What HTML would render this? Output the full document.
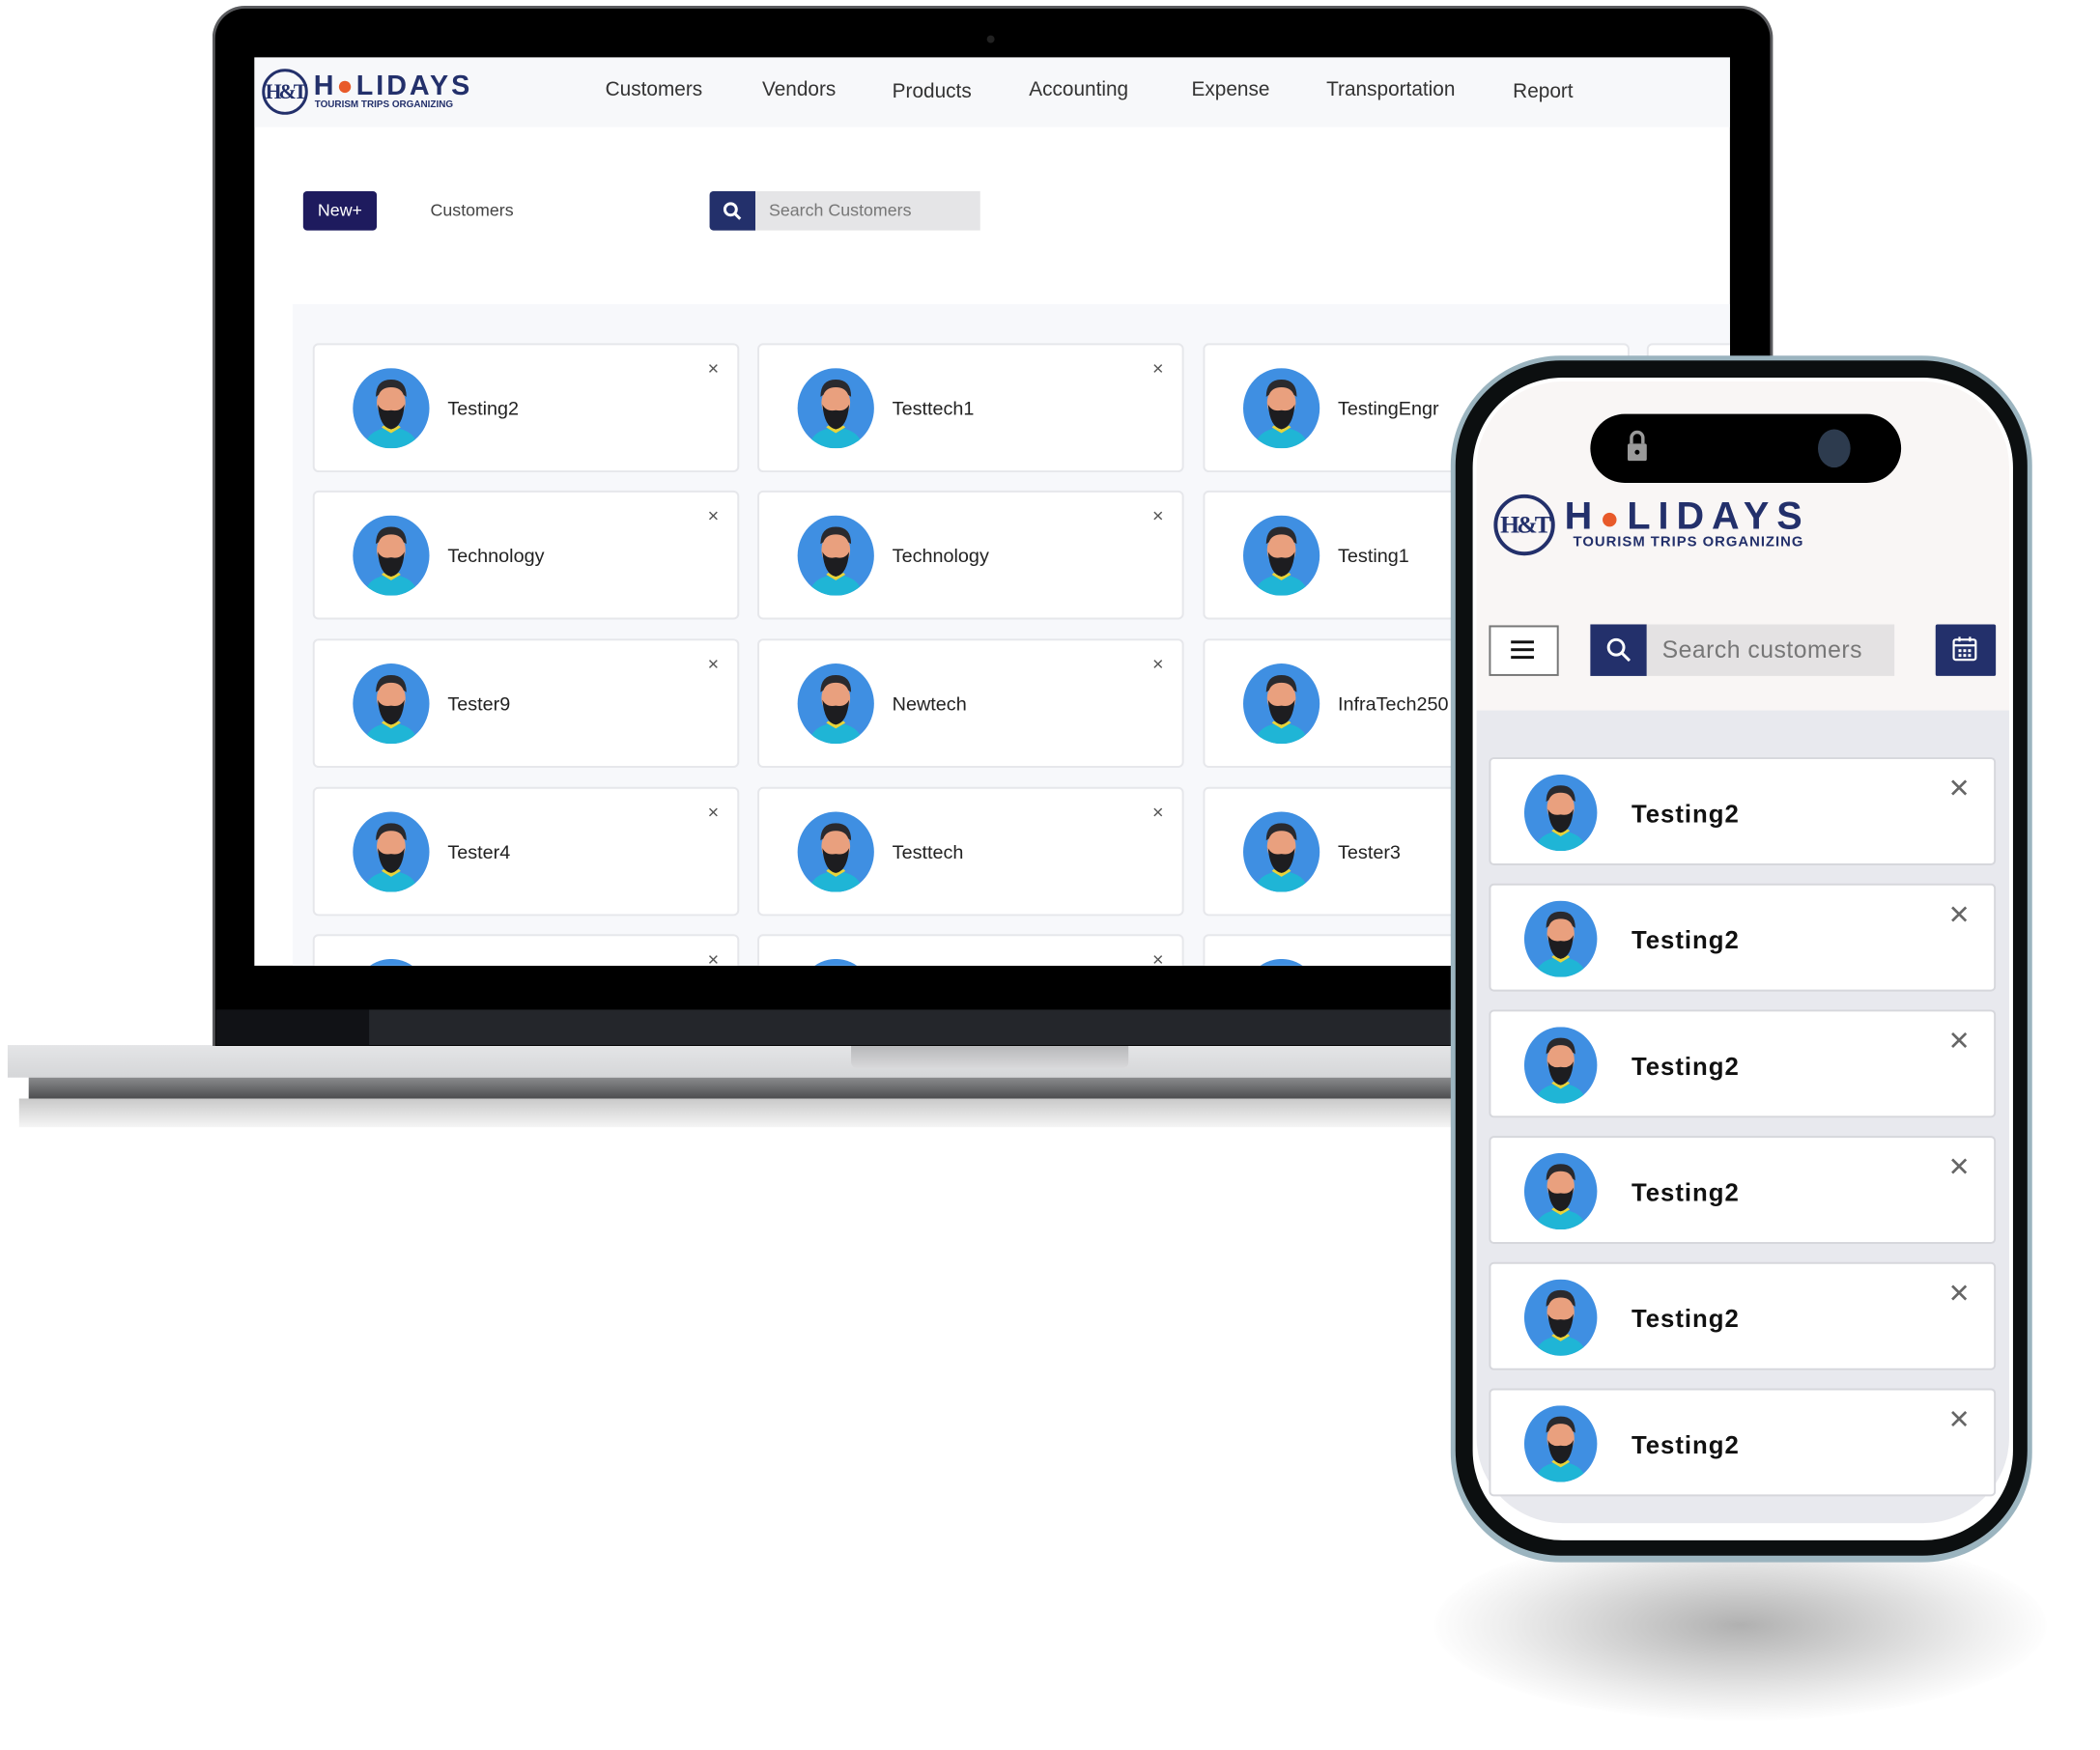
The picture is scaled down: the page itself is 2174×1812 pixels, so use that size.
<!DOCTYPE html>
<html><head><meta charset="utf-8">
<style>
*{margin:0;padding:0;box-sizing:border-box}
body{width:2174px;height:1806px;background:#fff;position:relative;overflow:hidden;font-family:"Liberation Sans",sans-serif}
#w{position:absolute;left:0;top:0;width:2200px;height:1830px;transform:scale(0.99);transform-origin:0 0}
.abs{position:absolute}
.card{position:absolute;background:#fff;border:2px solid #e6e7eb;border-radius:6px}
.card .av{position:absolute;left:39px;top:24px;width:82px;height:84px}
.card .nm{position:absolute;left:139px;top:56px;font-size:20px;color:#222}
.card .x{position:absolute;left:411px;top:14px;font-size:20px;color:#555}
.pc{position:absolute;left:1557px;width:530px;height:113px;background:#fff;border:2px solid #d6d7dc;border-radius:5px}
.pc .av{position:absolute;left:30px;top:16px;width:86px;height:80px}
.pc .nm{position:absolute;left:147px;top:42px;font-size:26px;font-weight:bold;color:#111;letter-spacing:1px}
.pc .x{position:absolute;left:478px;top:14px;font-size:28px;color:#666}
.nav{position:absolute;top:82px;font-size:21px;color:#333}
</style></head><body>
<svg width="0" height="0" style="position:absolute">
<defs>
<symbol id="av" viewBox="0 0 80 84">
<clipPath id="cp"><ellipse cx="40" cy="42" rx="40" ry="42"/></clipPath>
<ellipse cx="40" cy="42" rx="40" ry="42" fill="#3f8fe2"/>
<g clip-path="url(#cp)">
<path d="M12 84 Q14 64 40 62 Q66 64 68 84Z" fill="#1fb5d6"/>
<path d="M30 62 L40 68 L50 62 L48 60 L40 64 L32 60Z" fill="#e8d33a"/>
<ellipse cx="40" cy="36" rx="15" ry="18" fill="#e9a07e"/>
<path d="M24 30 Q24 12 40 12 Q56 12 56 30 L53 28 Q50 20 40 20 Q30 20 27 28Z" fill="#2a2a2e"/>
<path d="M26 38 Q28 62 40 64 Q52 62 54 38 Q50 46 40 44 Q30 46 26 38Z" fill="#1d1d20"/>
</g>
</symbol>
</defs></svg>
<div id="w">
<!-- laptop -->
<div class="abs" style="left:8px;top:1093px;width:2000px;height:34px;background:linear-gradient(#e4e5e7,#d5d6d8);"></div>
<div class="abs" style="left:30px;top:1127px;width:1980px;height:22px;background:linear-gradient(#8a8b8d,#4c4d4f)"></div>
<div class="abs" style="left:20px;top:1149px;width:1990px;height:30px;background:linear-gradient(#c9c9c9,#f5f5f5)"></div>
<div class="abs" style="left:890px;top:1093px;width:290px;height:24px;background:linear-gradient(#b6b7b9,#d8d8da);border-radius:0 0 6px 6px"></div>
<div class="abs" style="left:222px;top:6px;width:1632px;height:1088px;background:#000;border-radius:34px 34px 0 0;border:3px solid #5a5b5e;border-bottom:none"></div>
<div class="abs" style="left:226px;top:1056px;width:1624px;height:37px;background:#24262b"></div>
<div class="abs" style="left:226px;top:1056px;width:160px;height:37px;background:#111216"></div>
<div class="abs" style="left:1032px;top:37px;width:8px;height:8px;border-radius:50%;background:#222"></div>

<div class="abs" style="left:266px;top:60px;width:1543px;height:950px;background:#fff;overflow:hidden">
 <div class="abs" style="left:0;top:0;width:1543px;height:73px;background:#f7f8fa"></div>
 <div class="abs" style="left:8px;top:12px;font-family:'Liberation Serif',serif;font-size:22px;font-weight:bold;color:#23306b;border:3px solid #23306b;border-radius:50%;width:48px;height:48px;line-height:42px;text-align:center;letter-spacing:-3px">H&amp;T</div>
 <div class="abs" style="left:62px;top:14px;font-size:29px;font-weight:bold;color:#23306b;letter-spacing:3px">H<span style="color:#e85a2a">●</span>LIDAYS</div>
 <div class="abs" style="left:63px;top:44px;font-size:10px;font-weight:bold;color:#23306b">TOURISM TRIPS ORGANIZING</div>
 <div class="abs" style="left:51px;top:140px;width:77px;height:41px;background:#1e1b5e;border-radius:4px;color:#fff;font-size:18px;line-height:41px;text-align:center">New+</div>
 <div class="abs" style="left:184px;top:150px;font-size:18px;color:#444">Customers</div>
 <div class="abs" style="left:476px;top:140px;width:48px;height:41px;background:#23306b;border-radius:4px 0 0 4px"></div>
 <svg class="abs" style="left:489px;top:150px" width="22" height="22" viewBox="0 0 22 22"><circle cx="9" cy="9" r="6" stroke="#fff" stroke-width="3" fill="none"/><path d="M13 13 L19 19" stroke="#fff" stroke-width="3"/></svg>
 <div class="abs" style="left:524px;top:140px;width:235px;height:41px;background:#e5e5e7;color:#777;font-size:18px;line-height:41px;padding-left:14px">Search Customers</div>
</div>
<div class="nav" style="left:633px">Customers</div>
<div class="nav" style="left:797px">Vendors</div>
<div class="nav" style="left:933px;top:84px">Products</div>
<div class="nav" style="left:1076px">Accounting</div>
<div class="nav" style="left:1246px">Expense</div>
<div class="nav" style="left:1387px">Transportation</div>
<div class="nav" style="left:1582px;top:84px">Report</div>

<div class="abs" style="left:266px;top:318px;width:1543px;height:692px;overflow:hidden">
 <div class="abs" style="left:40px;top:0;width:1503px;height:692px;background:#f7f8fb"></div>
<div style="position:absolute;left:-266px;top:-318px;width:2174px;height:1400px">
 <div class="card" style="left:327px;top:359px;width:446px;height:135px"><svg class="av"><use href="#av"/></svg><div class="nm">Testing2</div><div class="x">×</div></div>
 <div class="card" style="left:792px;top:359px;width:446px;height:135px"><svg class="av"><use href="#av"/></svg><div class="nm">Testtech1</div><div class="x">×</div></div>
 <div class="card" style="left:1258px;top:359px;width:446px;height:135px"><svg class="av"><use href="#av"/></svg><div class="nm">TestingEngr</div><div class="x">×</div></div>
 <div class="card" style="left:1722px;top:359px;width:446px;height:135px"></div>
 <div class="card" style="left:327px;top:513px;width:446px;height:135px"><svg class="av"><use href="#av"/></svg><div class="nm">Technology</div><div class="x">×</div></div>
 <div class="card" style="left:792px;top:513px;width:446px;height:135px"><svg class="av"><use href="#av"/></svg><div class="nm">Technology</div><div class="x">×</div></div>
 <div class="card" style="left:1258px;top:513px;width:446px;height:135px"><svg class="av"><use href="#av"/></svg><div class="nm">Testing1</div><div class="x">×</div></div>
 <div class="card" style="left:327px;top:668px;width:446px;height:135px"><svg class="av"><use href="#av"/></svg><div class="nm">Tester9</div><div class="x">×</div></div>
 <div class="card" style="left:792px;top:668px;width:446px;height:135px"><svg class="av"><use href="#av"/></svg><div class="nm">Newtech</div><div class="x">×</div></div>
 <div class="card" style="left:1258px;top:668px;width:446px;height:135px"><svg class="av"><use href="#av"/></svg><div class="nm">InfraTech250</div><div class="x">×</div></div>
 <div class="card" style="left:327px;top:823px;width:446px;height:135px"><svg class="av"><use href="#av"/></svg><div class="nm">Tester4</div><div class="x">×</div></div>
 <div class="card" style="left:792px;top:823px;width:446px;height:135px"><svg class="av"><use href="#av"/></svg><div class="nm">Testtech</div><div class="x">×</div></div>
 <div class="card" style="left:1258px;top:823px;width:446px;height:135px"><svg class="av"><use href="#av"/></svg><div class="nm">Tester3</div><div class="x">×</div></div>
 <div class="card" style="left:327px;top:977px;width:446px;height:135px"><svg class="av"><use href="#av"/></svg><div class="x">×</div></div>
 <div class="card" style="left:792px;top:977px;width:446px;height:135px"><svg class="av"><use href="#av"/></svg><div class="x">×</div></div>
 <div class="card" style="left:1258px;top:977px;width:446px;height:135px"><svg class="av"><use href="#av"/></svg></div>
</div></div>

<!-- phone shadow -->
<div class="abs" style="left:1500px;top:1600px;width:640px;height:200px;border-radius:50%;background:radial-gradient(ellipse at center,rgba(150,150,150,.75),rgba(200,200,200,.3) 55%,rgba(255,255,255,0) 72%)"></div>

<!-- phone -->
<div class="abs" style="left:1517px;top:372px;width:608px;height:1262px;border-radius:115px;background:#9bb4bf"></div>
<div class="abs" style="left:1522px;top:377px;width:598px;height:1250px;border-radius:110px;background:#0c0f10"></div>
<div class="abs" style="left:1540px;top:395px;width:565px;height:1216px;border-radius:94px;background:#fff"></div>
<div class="abs" style="left:1544px;top:399px;width:557px;height:1194px;border-radius:90px;background:#f9f6f5;overflow:hidden">
 <div class="abs" style="left:0;top:344px;width:557px;height:900px;background:#e8e9ee"></div>
</div>
<div class="abs" style="left:1663px;top:433px;width:325px;height:72px;border-radius:36px;background:#000"></div>
<div class="abs" style="left:1901px;top:449px;width:34px;height:40px;border-radius:50%;background:#2d3b4e"></div>
<svg class="abs" style="left:1700px;top:446px" width="24" height="40" viewBox="0 0 24 40"><path d="M6 18 V12 A6 6 0 0 1 18 12 V18" stroke="#9a9a9a" stroke-width="3.5" fill="none"/><rect x="2" y="18" width="20" height="18" rx="2" fill="#9a9a9a"/><circle cx="12" cy="27" r="2.5" fill="#000"/></svg>
<!-- phone logo -->
<div class="abs" style="left:1562px;top:517px;width:64px;height:64px;border:4px solid #23306b;border-radius:50%;font-family:'Liberation Serif',serif;font-weight:bold;font-size:26px;color:#23306b;line-height:56px;text-align:center;letter-spacing:-3px">H&amp;T</div>
<div class="abs" style="left:1636px;top:518px;font-size:40px;font-weight:bold;color:#23306b;letter-spacing:8px">H<span style="color:#e85a2a;font-size:34px">●</span>LIDAYS</div>
<div class="abs" style="left:1645px;top:558px;font-size:15px;font-weight:bold;color:#23306b;letter-spacing:1px">TOURISM TRIPS ORGANIZING</div>
<!-- toolbar -->
<div class="abs" style="left:1557px;top:654px;width:73px;height:53px;border:2px solid #777;background:#fff"></div>
<div class="abs" style="left:1580px;top:670px;width:24px;height:3px;background:#111;box-shadow:0 8px 0 #111,0 16px 0 #111"></div>
<div class="abs" style="left:1663px;top:653px;width:59px;height:54px;background:#23306b"></div>
<svg class="abs" style="left:1678px;top:665px" width="30" height="30" viewBox="0 0 30 30"><circle cx="12" cy="12" r="8" stroke="#fff" stroke-width="3" fill="none"/><path d="M18 18 L26 26" stroke="#fff" stroke-width="3"/></svg>
<div class="abs" style="left:1722px;top:653px;width:259px;height:54px;background:#e4e2e3;color:#777;font-size:25px;line-height:54px;padding-left:16px;letter-spacing:.5px">Search customers</div>
<div class="abs" style="left:2024px;top:653px;width:63px;height:54px;background:#23306b;border-radius:2px"></div>
<svg class="abs" style="left:2040px;top:664px" width="30" height="30" viewBox="0 0 30 30"><rect x="3" y="5" width="23" height="21" rx="2" stroke="#fff" stroke-width="2.2" fill="none"/><path d="M3 11 H26 M9 2 V7 M20 2 V7" stroke="#fff" stroke-width="2.2"/><g fill="#fff"><rect x="8" y="15" width="3" height="3"/><rect x="13" y="15" width="3" height="3"/><rect x="18" y="15" width="3" height="3"/><rect x="8" y="20" width="3" height="3"/><rect x="13" y="20" width="3" height="3"/><rect x="18" y="20" width="3" height="3"/></g></svg>

<div class="pc" style="top:792px"><svg class="av"><use href="#av"/></svg><div class="nm">Testing2</div><div class="x">✕</div></div>
<div class="pc" style="top:924px"><svg class="av"><use href="#av"/></svg><div class="nm">Testing2</div><div class="x">✕</div></div>
<div class="pc" style="top:1056px"><svg class="av"><use href="#av"/></svg><div class="nm">Testing2</div><div class="x">✕</div></div>
<div class="pc" style="top:1188px"><svg class="av"><use href="#av"/></svg><div class="nm">Testing2</div><div class="x">✕</div></div>
<div class="pc" style="top:1320px"><svg class="av"><use href="#av"/></svg><div class="nm">Testing2</div><div class="x">✕</div></div>
<div class="pc" style="top:1452px"><svg class="av"><use href="#av"/></svg><div class="nm">Testing2</div><div class="x">✕</div></div>
</div>
</body></html>
